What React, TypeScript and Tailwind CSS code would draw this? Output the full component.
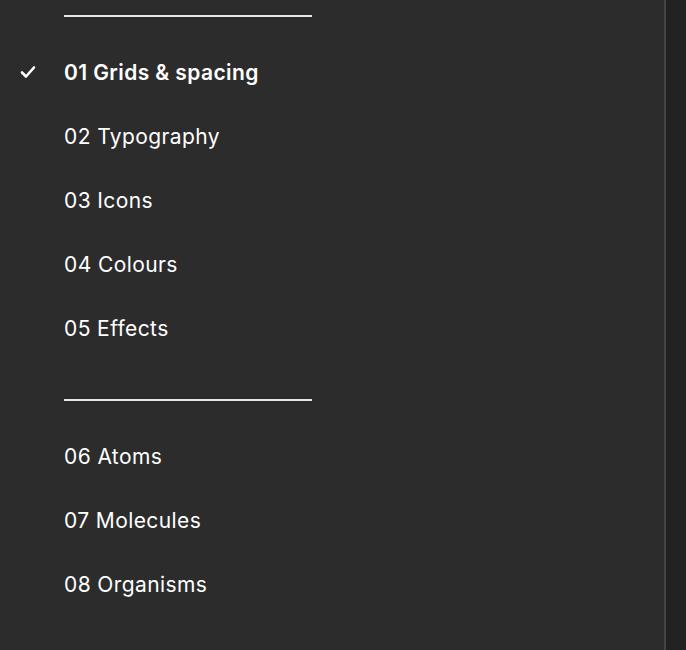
import React from "react";

const groupA = ["01 Grids & spacing", "02 Typography", "03 Icons", "04 Colours", "05 Effects"];
const groupB = ["06 Atoms", "07 Molecules", "08 Organisms"];

function Check() {
  return (
    <svg width="16" height="14" viewBox="0 0 16 14" className="absolute left-[20px] top-1/2 -translate-y-1/2">
      <path d="M2 7.5 L6 11.5 L14 2.5" fill="none" stroke="white" strokeWidth="2.6" strokeLinecap="round" strokeLinejoin="round" />
    </svg>
  );
}

function Item({ label, checked }: { label: string; checked?: boolean }) {
  return (
    <div className="relative h-[64px] flex items-center pl-[64px] pt-[2px]">
      {checked && <Check />}
      <span className={`text-[21px] tracking-[0.4px] text-white ${checked ? "font-semibold" : "font-normal"}`}>{label}</span>
    </div>
  );
}

function Sep({ top }: { top: string }) {
  return <div className={`${top} mb-[23px] ml-[64px] w-[248px] h-[2px] bg-[#e8e8e8]`} />;
}

export default function App() {
  return (
    <div className="flex w-[686px] h-[650px] overflow-hidden bg-[#2c2c2c]" style={{ fontFamily: "Inter, 'Noto Sans', sans-serif" }}>
      <div className="w-[664px] h-full flex flex-col">
        <Sep top="mt-[15px]" />
        {groupA.map((l, i) => (
          <Item key={l} label={l} checked={i === 0} />
        ))}
        <Sep top="mt-[39px]" />
        {groupB.map((l) => (
          <Item key={l} label={l} />
        ))}
      </div>
      <div className="w-[2px] h-full bg-[#444444]" />
      <div className="flex-1 h-full bg-[#222222]" />
    </div>
  );
}
